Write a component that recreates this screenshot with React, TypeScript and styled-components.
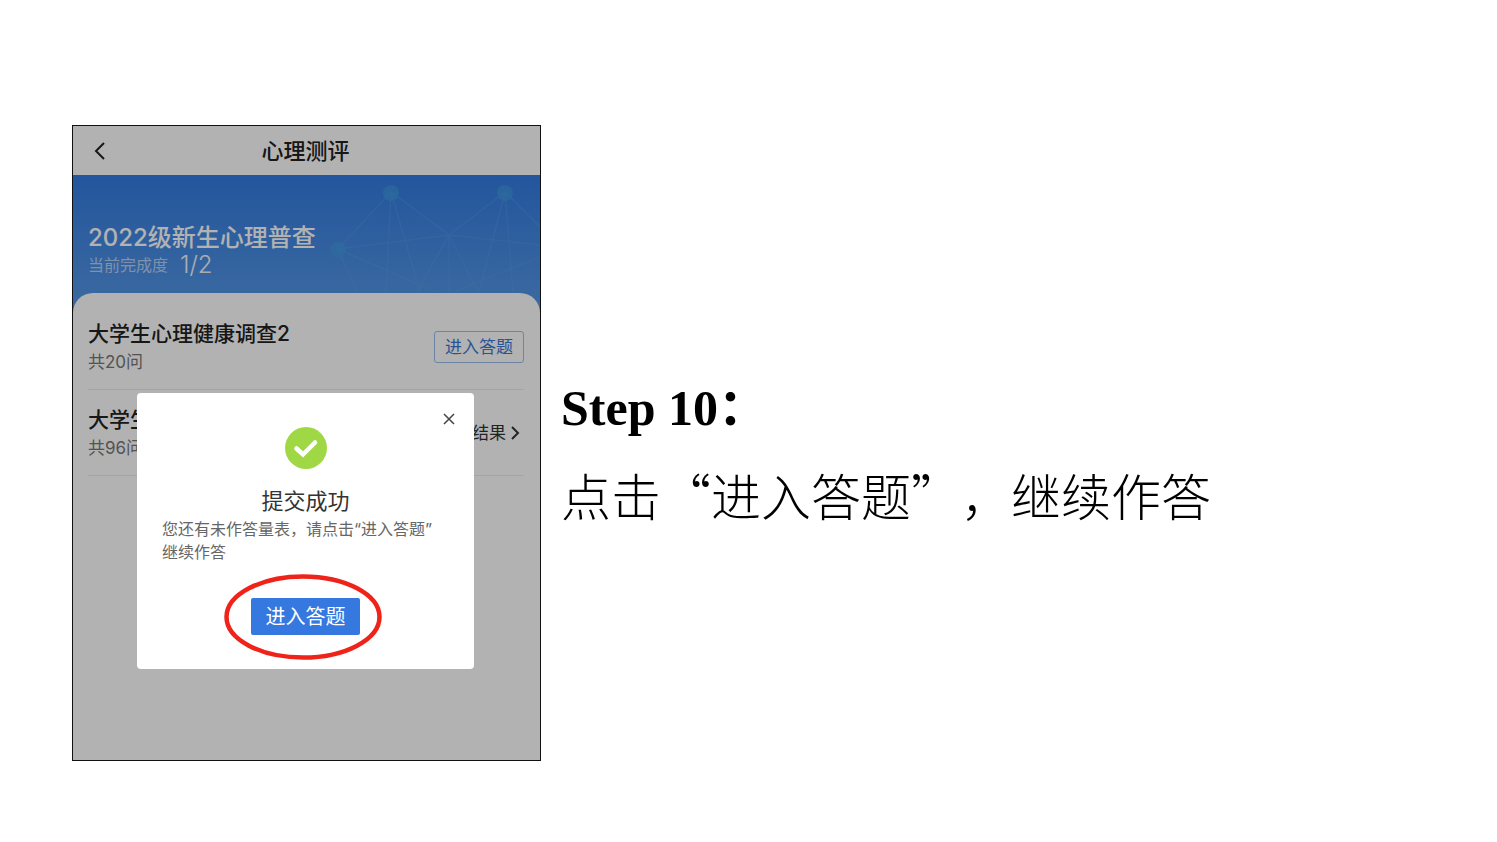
import React from "react";
import styled, { createGlobalStyle } from "styled-components";

const GlobalStyle = createGlobalStyle`
  *, *::before, *::after { box-sizing: border-box; }
  body { margin: 0; background: #fff; }
  h1, h2, h3, p, ul { margin: 0; padding: 0; font-weight: inherit; }
  button { font: inherit; color: inherit; border: 0; background: none; padding: 0; cursor: pointer; }
`;

const Slide = styled.main`
  display: flex;
  gap: 20px;
  padding: 125px 72px 80px;
  min-height: 100vh;
  align-items: flex-start;
`;

const Phone = styled.section`
  position: relative;
  display: flex;
  flex-direction: column;
  flex: 0 0 469px;
  min-height: 636px;
  border: 1px solid #111;
  background: #fff;
  font-family: Inter, "Noto Sans CJK SC", sans-serif;
  color: #222;
`;

const TitleBar = styled.header`
  display: grid;
  grid-template-columns: 54px 1fr 56px;
  align-items: center;
  height: 49px;
  text-align: center;
`;

const IconButton = styled.button`
  display: grid;
  place-items: center;
`;

const BarTitle = styled.h1`
  font-size: 22px;
  line-height: 30px;
  font-weight: 500;
`;

const Banner = styled.div`
  position: relative;
  padding: 48px 15px 36px;
  background: linear-gradient(#337be2, #5799e6);
  color: #fff;
`;

const Network = styled.svg`
  position: absolute;
  right: 0;
  top: 0;
`;

const BannerTitle = styled.h2`
  font-size: 24px;
  line-height: 30px;
  font-weight: 500;
`;

const Progress = styled.p`
  display: flex;
  align-items: center;
  gap: 12px;
  font-size: 16px;
  line-height: 24px;
  color: rgba(255, 255, 255, 0.6);
`;

const Fraction = styled.span`
  font-size: 24px;
  font-weight: 300;
  color: #f4f8fd;
`;

const List = styled.ul`
  position: relative;
  flex: 1;
  margin-top: -20px;
  padding: 11px 16px 0 15px;
  border-radius: 20px 20px 0 0;
  background: #fff;
  list-style: none;
`;

const Row = styled.li`
  display: flex;
  align-items: center;
  justify-content: space-between;
  padding: 15px 0 14px;
  border-bottom: 1px solid #ebebeb;
`;

const RowTitle = styled.h3`
  font-size: 21px;
  line-height: 30px;
  font-weight: 500;
`;

const RowMeta = styled.p`
  font-size: 17px;
  line-height: 26px;
  color: #777;
`;

const OutlineButton = styled.button`
  width: 90px;
  height: 32px;
  border: 1px solid #9dbdec;
  border-radius: 3px;
  font-size: 17px;
  line-height: 28px;
  color: #3a78d8;
`;

const ResultLink = styled.a`
  display: flex;
  align-items: center;
  gap: 4px;
  padding-right: 4px;
  font-size: 17px;
  line-height: 26px;
  color: #333;
  text-decoration: none;
`;

const Backdrop = styled.div`
  position: absolute;
  inset: 0;
  display: flex;
  align-items: flex-start;
  justify-content: center;
  padding: 267px 66px 0 64px;
  background: rgba(0, 0, 0, 0.3);
`;

const Dialog = styled.div`
  position: relative;
  display: flex;
  flex-direction: column;
  align-items: center;
  width: 100%;
  padding: 34px 0;
  border-radius: 4px;
  background: #fff;
`;

const CloseButton = styled(IconButton)`
  position: absolute;
  top: 15px;
  right: 14px;
  width: 22px;
  height: 22px;
`;

const DialogTitle = styled.h2`
  margin-top: 15px;
  font-size: 22px;
  line-height: 34px;
  color: #333;
`;

const DialogText = styled.p`
  align-self: stretch;
  padding: 0 25px;
  font-size: 16px;
  line-height: 23px;
  color: #666;
  text-spacing-trim: space-all;
`;

const PrimaryAction = styled.div`
  position: relative;
  display: grid;
  place-items: center;
  margin-top: 34px;
`;

const PrimaryButton = styled.button`
  width: 109px;
  height: 37px;
  border-radius: 2px;
  background: #3478e0;
  color: #fff;
  font-size: 20px;
  line-height: 36px;
`;

const Highlight = styled.svg`
  position: absolute;
  left: -28px;
  top: -25px;
  pointer-events: none;
`;

const Instructions = styled.section`
  flex: 1;
  padding-top: 240px;
  font-family: "Noto Sans CJK SC", sans-serif;
  color: #000;
  text-spacing-trim: space-all;
`;

const StepTitle = styled.h2`
  font-family: "Liberation Serif", "Noto Sans CJK SC", serif;
  font-size: 50px;
  line-height: 86px;
  font-weight: 700;
`;

const StepText = styled.p`
  font-size: 50px;
  line-height: 86px;
  font-weight: 300;
`;

function NetworkArt() {
  return (
    <Network width="220" height="117" viewBox="0 0 220 117" fill="none" aria-hidden="true">
      <g stroke="#62a8f0" strokeOpacity="0.25" strokeWidth="1.5">
        <path d="M71 17 18 74 129 60 71 17 66 117M71 17 100 117M129 60 185 17 220 52M185 17 159 117M185 17 193 117M129 60 220 70M129 60 97 117M129 60V117M129 60 158 117M18 74 37 117M18 74 84 103 115 117M220 82 159 106 135 117" />
      </g>
      <g fill="#419de2" fillOpacity="0.6">
        <circle cx="71" cy="18" r="8" />
        <circle cx="185" cy="18" r="8" />
        <circle cx="18" cy="75" r="8" />
      </g>
    </Network>
  );
}

export default function App() {
  return (
    <>
      <GlobalStyle />
      <Slide>
        <Phone>
          <TitleBar>
            <IconButton aria-label="返回">
              <svg width="12" height="18" viewBox="0 0 12 18" fill="none" stroke="#222" strokeWidth="2">
                <path d="M10 1 2 9l8 8" />
              </svg>
            </IconButton>
            <BarTitle>心理测评</BarTitle>
          </TitleBar>
          <Banner>
            <NetworkArt />
            <BannerTitle>2022级新生心理普查</BannerTitle>
            <Progress>
              当前完成度 <Fraction>1/2</Fraction>
            </Progress>
          </Banner>
          <List>
            <Row>
              <div>
                <RowTitle>大学生心理健康调查2</RowTitle>
                <RowMeta>共20问</RowMeta>
              </div>
              <OutlineButton>进入答题</OutlineButton>
            </Row>
            <Row>
              <div>
                <RowTitle>大学生</RowTitle>
                <RowMeta>共96问</RowMeta>
              </div>
              <ResultLink href="#result">
                结果
                <svg width="10" height="14" viewBox="0 0 10 14" fill="none" stroke="#333" strokeWidth="2">
                  <path d="m2 1 6 6-6 6" />
                </svg>
              </ResultLink>
            </Row>
          </List>
          <Backdrop>
            <Dialog role="dialog" aria-labelledby="dialog-title">
              <CloseButton aria-label="关闭">
                <svg width="12" height="12" viewBox="0 0 12 12" stroke="#444" strokeWidth="1.5">
                  <path d="m1 1 10 10M11 1 1 11" />
                </svg>
              </CloseButton>
              <svg width="42" height="42" viewBox="0 0 42 42" fill="none" aria-hidden="true">
                <circle cx="21" cy="21" r="21" fill="#a0d845" />
                <path d="m11.5 21.5 6.5 6 12-12" stroke="#fff" strokeWidth="4.5" strokeLinecap="round" />
              </svg>
              <DialogTitle id="dialog-title">提交成功</DialogTitle>
              <DialogText>
                您还有未作答量表，请点击“进入答题”
                <br />
                继续作答
              </DialogText>
              <PrimaryAction>
                <PrimaryButton>进入答题</PrimaryButton>
                <Highlight width="160" height="88" viewBox="0 0 160 88" fill="none" aria-hidden="true">
                  <ellipse cx="80" cy="44" rx="76.5" ry="40.5" stroke="#f0231a" strokeWidth="4.5" />
                </Highlight>
              </PrimaryAction>
            </Dialog>
          </Backdrop>
        </Phone>
        <Instructions>
          <StepTitle>Step 10：</StepTitle>
          <StepText>点击“进入答题”，继续作答</StepText>
        </Instructions>
      </Slide>
    </>
  );
}
